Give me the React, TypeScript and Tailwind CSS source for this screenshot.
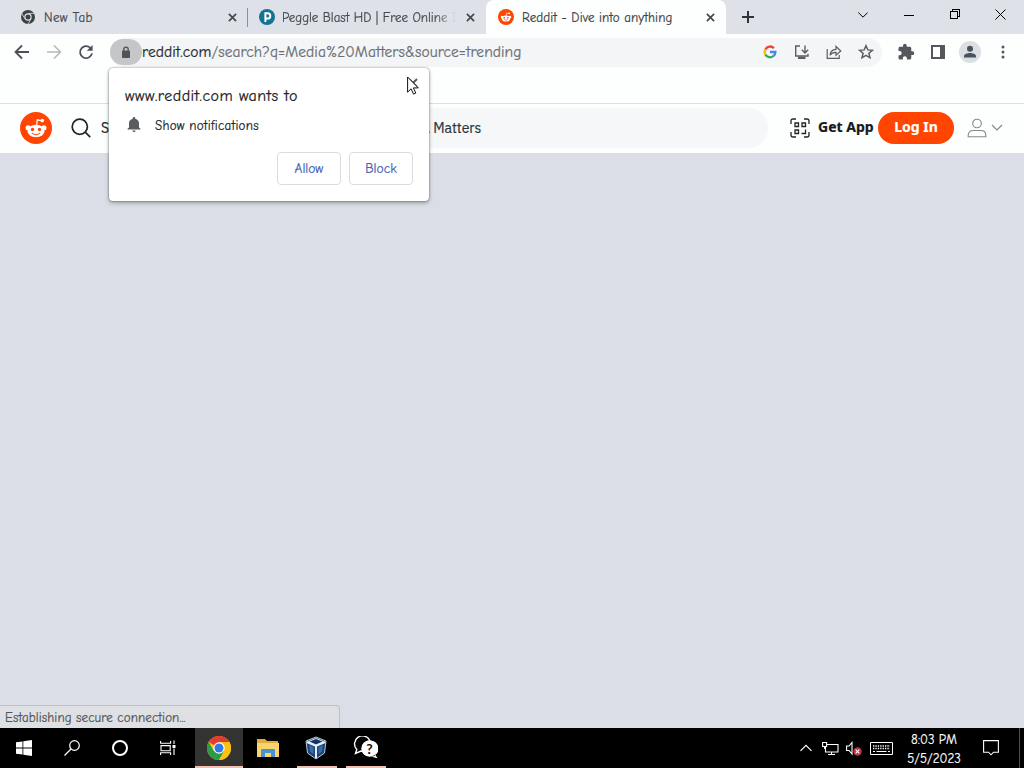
import type { ReactNode } from 'react';

const uiFont = "font-['Comic_Neue','Comic_Sans_MS',Lato,sans-serif]";

const CloseIcon = ({ className }: { className?: string }) => (
  <svg viewBox="0 0 10 10" className={className} fill="none" stroke="currentColor" strokeWidth="1.9">
    <path d="M1 1l8 8M9 1L1 9" />
  </svg>
);

const ChromeMono = () => (
  <svg viewBox="0 0 16 16" className="h-4 w-4 shrink-0">
    <circle cx="8" cy="8" r="7" fill="#3c4146" />
    <path d="M8 4.4h6.2M4.9 9.8L1.9 4.600M11.1 9.8L8 15" fill="none" stroke="#dee1e7" strokeWidth="0.8" />
    <circle cx="8" cy="8" r="3.100" fill="#3c4146" stroke="#dee1e7" strokeWidth="1.200" />
  </svg>
);

const RedditLogo = ({ className }: { className?: string }) => (
  <svg viewBox="0 0 32 32" className={className}>
    <circle cx="16" cy="16" r="16" fill="#ff4500" />
    <path d="M16.6 14l.6-6.2 4.8 1" fill="none" stroke="#fff" strokeWidth="1.2" />
    <circle cx="22.3" cy="8.6" r="1.8" fill="#fff" />
    <circle cx="8" cy="15.8" r="2.5" fill="#fff" />
    <circle cx="24" cy="15.8" r="2.5" fill="#fff" />
    <ellipse cx="16" cy="19" rx="8.6" ry="6.2" fill="#fff" />
    <circle cx="12.5" cy="17.5" r="1.7" fill="#ff4500" />
    <circle cx="19.5" cy="17.5" r="1.7" fill="#ff4500" />
    <path d="M12.2 21.4q3.8 2.6 7.6 0" fill="none" stroke="#ff4500" strokeWidth="1.1" strokeLinecap="round" />
  </svg>
);

const TabStrip = () => (
  <div className="flex h-[34px] bg-[#dee1e7] text-[13px] text-[#45494e]">
    <div className="flex h-[34px] w-[248px] items-center pl-5">
      <ChromeMono />
      <span className="ml-2 w-[142px] pt-px tracking-[0.35px]">New Tab</span>
      <CloseIcon className="ml-[42px] h-[9px] w-[9px]" />
      <span className="ml-[10px] h-[19px] w-px bg-[#8b9097]" />
    </div>
    <div className="flex h-[34px] w-[238px] items-center pl-[11px]">
      <svg viewBox="0 0 16 16" className="h-4 w-4 shrink-0">
        <circle cx="8" cy="8" r="8" fill="#137391" />
        <path d="M6.4 13V4.3h2.3a2.6 2.6 0 010 5.2H6.4" fill="none" stroke="#fff" strokeWidth="2" />
      </svg>
      <span className="ml-[7px] w-[174px] whitespace-nowrap pt-px [mask-image:linear-gradient(to_right,black_88%,transparent)]">
        Peggle Blast HD | Free Online I
      </span>
      <CloseIcon className="ml-[10px] h-[9px] w-[9px]" />
    </div>
    <div className="relative flex h-[34px] w-60 items-center rounded-t-lg bg-[#fdfefe] pl-3">
      <RedditLogo className="h-4 w-4 shrink-0" />
      <span className="ml-2 w-[178px] whitespace-nowrap pt-px tracking-[0.1px] text-[#3c4043]">Reddit - Dive into anything</span>
      <CloseIcon className="ml-[5.5px] h-[9px] w-[9px]" />
    </div>
    <div className="flex flex-1 items-center pl-4 text-black">
      <svg viewBox="0 0 12 12" className="h-3 w-3" fill="none" stroke="#303438" strokeWidth="2">
        <path d="M6 0v12M0 6h12" />
      </svg>
      <svg viewBox="0 0 10 6" className="-mt-1 ml-[104px] h-1.5 w-2.5" fill="none" stroke="currentColor">
        <path d="M.3.5L5 5.2 9.7.5" />
      </svg>
      <span className="-mt-1 ml-9 h-px w-2.5 bg-black" />
      <svg viewBox="0 0 10 10" className="-mt-1.5 ml-9 h-2.5 w-2.5" fill="none" stroke="currentColor" shapeRendering="crispEdges">
        <path d="M.5 2.5h7v7h-7zM2.5 2.5v-2h7v7h-2" />
      </svg>
      <svg viewBox="0 0 11 11" className="-mt-1.5 ml-[35px] h-[11px] w-[11px]" fill="none" stroke="currentColor">
        <path d="M.5.5l10 10M10.5.5l-10 10" />
      </svg>
    </div>
  </div>
);

const ToolIcon = ({ children }: { children: ReactNode }) => (
  <svg viewBox="0 0 16 16" className="h-4 w-4 shrink-0" fill="none" stroke="#5b5f63" strokeWidth="1.4">
    {children}
  </svg>
);

const Toolbar = () => (
  <div className="flex h-9 items-center bg-[#fdfefe] pl-3.5">
    <div className="flex gap-4">
      <ToolIcon><path d="M15 8H2M8 1.5L1.5 8 8 14.5" stroke="#4d5155" strokeWidth="1.8" /></ToolIcon>
      <ToolIcon><path d="M1 8h13M8 1.5L14.5 8 8 14.5" stroke="#b7b9bc" strokeWidth="1.6" /></ToolIcon>
      <ToolIcon>
        <path d="M13.2 5A6 6 0 1014 9.3" stroke="#4d5155" strokeWidth="1.8" />
        <path d="M14.6 1v5.8H8.8z" fill="#4d5155" stroke="none" />
      </ToolIcon>
    </div>
    <div className="ml-4 flex h-[29px] w-[772px] items-center rounded-full bg-[#f3f5f6]">
      <span className="flex h-[26px] w-8 items-center justify-center rounded-full bg-[#c4c6c8]">
        <svg viewBox="0 0 10 13" className="h-[13px] w-2.5">
          <rect x="1" y="4.5" width="8" height="7.5" rx="0.8" fill="#505356" />
          <path d="M2.8 5V3.3a2.2 2.2 0 014.4 0V5" fill="none" stroke="#505356" strokeWidth="1.3" />
        </svg>
      </span>
      <span className="w-[621px] whitespace-nowrap pt-0.5 text-[15.5px] tracking-[0.05px] text-[#6a6e72]">
        <span className="text-[#25282b]">reddit.com</span>/search?q=Media%20Matters&amp;source=trending
      </span>
      <svg viewBox="0 0 14 14" className="mr-[17px] h-3.5 w-3.5 shrink-0" fill="none" strokeWidth="2.3">
        <path d="M2.4 4.4A5.2 5.2 0 0110.9 3.2" stroke="#ea4335" />
        <path d="M2.4 9.6a5.2 5.2 0 010-5.2" stroke="#fbbc05" />
        <path d="M10.6 10.8a5.2 5.2 0 01-8.2-1.2" stroke="#34a853" />
        <path d="M7 7h5.4a5.2 5.2 0 01-1.8 3.8" stroke="#4285f4" />
      </svg>
      <div className="flex gap-4">
        <ToolIcon>
          <path d="M6 2H1.7v10H14V9.8M11 1.5v7M7.8 5.7L11 8.9l3.2-3.2" />
          <path d="M4 13.8h7.5" strokeWidth="2.4" />
        </ToolIcon>
        <ToolIcon>
          <path d="M1.2 5v9.3h12V11M4 11.2c.4-4 2.5-5.7 6-5.8V2.5L14.8 7 10 11.2V8.4c-3-.1-4.8.9-6 2.8z" strokeWidth="1.2" />
        </ToolIcon>
        <ToolIcon>
          <path d="M8 1.7l1.8 4.2 4.6.4-3.5 3 1.1 4.5-4-2.4-4 2.4 1.1-4.5-3.5-3 4.6-.4z" strokeWidth="1.5" />
        </ToolIcon>
      </div>
    </div>
    <div className="ml-[15px] flex items-center">
      <svg viewBox="0 0 24 24" className="h-[18px] w-[18px]" fill="#54585c">
        <path d="M20.5 11H19V7c0-1.1-.9-2-2-2h-4V3.5a2.5 2.5 0 00-5 0V5H4c-1.1 0-2 .9-2 2v3.8h1.5c1.5 0 2.7 1.2 2.7 2.7S5 16.2 3.5 16.2H2V20c0 1.1.9 2 2 2h3.8v-1.5c0-1.5 1.2-2.7 2.7-2.7s2.7 1.2 2.7 2.7V22H17c1.1 0 2-.9 2-2v-4h1.5a2.5 2.5 0 000-5z" />
      </svg>
      <svg viewBox="0 0 14 14" className="ml-4 h-3.5 w-3.5">
        <path d="M1 1h12v12H1z" fill="none" stroke="#54585c" strokeWidth="2" />
        <path d="M9 1h4v12H9z" fill="#54585c" />
      </svg>
      <svg viewBox="0 0 22 22" className="ml-[14px] h-[22px] w-[22px]">
        <circle cx="11" cy="11" r="11" fill="#dbdfe4" />
        <circle cx="11" cy="7.8" r="3" fill="#48525d" />
        <path d="M5 16.5v-1.2c0-2.3 3.5-3.3 6-3.3s6 1 6 3.3v1.2z" fill="#48525d" />
      </svg>
      <svg viewBox="0 0 4 14" className="ml-[19.5px] h-3.5 w-1" fill="#54585c">
        <circle cx="2" cy="2" r="1.5" />
        <circle cx="2" cy="7" r="1.5" />
        <circle cx="2" cy="12" r="1.5" />
      </svg>
    </div>
  </div>
);

const RedditHeader = () => (
  <header className="flex h-[50px] items-center border-t border-[#dedfe1] bg-[#fdfefe] pb-0.5 pl-5">
    <RedditLogo className="h-8 w-8" />
    <div className="ml-3 flex h-10 w-[704px] items-center rounded-full bg-gradient-to-r from-[#fdfefe] from-15% to-[#f5f7f9] to-30% pl-[7px]">
      <svg viewBox="0 0 20 20" className="h-5 w-5 shrink-0" fill="none" stroke="#202428" strokeWidth="1.7">
        <circle cx="8.8" cy="8.7" r="7.6" />
        <path d="M14.2 14.2l5 5" />
      </svg>
      <span className="ml-[10px] whitespace-nowrap font-['IBM_Plex_Sans','Liberation_Sans',sans-serif] text-sm text-[#24282c]">
        Search
      </span>
      <span className="ml-[278px] whitespace-nowrap font-['IBM_Plex_Sans','Liberation_Sans',sans-serif] text-sm text-[#303438]">
        a Matters
      </span>
    </div>
    <div className="flex flex-1 items-center font-['Noto_Sans',sans-serif] text-sm font-bold">
      <svg viewBox="0 0 20 20" className="ml-[22px] h-5 w-5" fill="none" stroke="#202428" strokeWidth="1.3">
        <path d="M1 6V3q0-2 2-2h3M14 1h3q2 0 2 2v3M1 14v3q0 2 2 2h3M14 19h3q2 0 2-2v-3" />
        <path d="M5 5h3.5v3.5H5zM12 5h3.5v3.5H12zM5 12h3.5v3.5H5zM15.5 11.5v4h-4" />
      </svg>
      <span className="ml-2 w-[56px] whitespace-nowrap pb-0.5 text-[#17191b]">Get App</span>
      <span className="ml-1 flex h-8 w-[76px] items-center justify-center rounded-full bg-[#ff4500] pb-0.5 text-white">Log In</span>
      <svg viewBox="0 0 20 20" className="ml-[13px] h-5 w-5" fill="none" stroke="#85888b" strokeWidth="1.1">
        <circle cx="10" cy="5.5" r="4.3" />
        <path d="M1.2 18.8v-1.5c0-3 2-4.8 4.8-4.8h8c2.8 0 4.8 1.8 4.8 4.8v1.5z" />
      </svg>
      <svg viewBox="0 0 12 8" className="ml-1 h-2 w-3" fill="none" stroke="#85888b" strokeWidth="1.2">
        <path d="M1 1l5 5 5-5" />
      </svg>
    </div>
  </header>
);

const PermissionPopup = () => (
  <div className="absolute left-[109px] top-[68px] h-[133px] w-80 rounded-[4px] bg-white px-4 pt-[17px] text-[#202124] shadow-[0_0_2px_rgba(0,0,0,0.5),0_2px_4px_rgba(0,0,0,0.3)]">
    <p className="text-[16px] leading-[22px] tracking-[0.42px]">www.reddit.com wants to</p>
    <div className="mt-2 flex h-5 items-center">
      <svg viewBox="0 0 14 16" className="ml-[2px] h-4 w-3.5" fill="#5a5d60">
        <path d="M7 15a1.6 1.6 0 001.6-1.5H5.4A1.6 1.6 0 007 15zM12 10.5v-4c0-2.5-1.3-4.2-3.7-4.8V1.3a1.3 1.3 0 00-2.6 0v.4C3.3 2.3 2 4 2 6.500v4L.5 11.8v.8h13v-.8z" />
      </svg>
      <span className="ml-[14px] pt-0.5 text-[13px] tracking-[0.25px]">Show notifications</span>
    </div>
    <div className="mt-[17px] flex justify-end gap-2 text-[13.5px] text-[#3f62b5]">
      <span className="flex h-[33px] w-16 items-center justify-center rounded border border-[#dadce0] pt-px">Allow</span>
      <span className="flex h-[33px] w-16 items-center justify-center rounded border border-[#dadce0] pt-px">Block</span>
    </div>
    <CloseIcon className="absolute right-[11px] top-[10px] h-2.5 w-2.5 text-[#55585b]" />
    <svg viewBox="0 0 12 19" className="absolute left-[298px] top-2 h-[19px] w-3">
      <path d="M.6 1v15.2l3.5-3.4 2.4 5.3 2.3-1-2.4-5.2h4.9z" fill="#fff" stroke="#111" strokeWidth="1" />
    </svg>
  </div>
);

const ChromeColor = () => (
  <svg viewBox="0 0 24 24" className="h-6 w-6">
    <circle cx="12" cy="12" r="12" fill="#fbc116" />
    <path d="M12 12L1.6 6A12 12 0 0122.4 6H12z" fill="#e33b2e" />
    <path d="M1.6 6A12 12 0 0012 24l5.2-9L12 12 6.8 15z" fill="#2a9b47" />
    <path d="M22.4 6A12 12 0 0112 24l5.2-9L15 6z" fill="#fbc116" />
    <circle cx="12" cy="12" r="5.7" fill="#fff" />
    <circle cx="12" cy="12" r="4.5" fill="#3478e5" />
  </svg>
);

const Taskbar = () => (
  <footer className="flex h-10 items-center bg-black text-white">
    <div className="flex h-10 w-12 items-center justify-center">
      <svg viewBox="0 0 16 16" className="h-4 w-4" fill="currentColor">
        <path d="M0 2.3l6.5-.9v6.1H0zM7.3 1.3L16 0v7.5H7.3zM0 8.4h6.5v6.2L0 13.7zM7.3 8.4H16V16l-8.7-1.3z" />
      </svg>
    </div>
    <div className="flex h-10 w-12 items-center justify-center">
      <svg viewBox="0 0 16 16" className="h-4 w-4" fill="none" stroke="currentColor" strokeWidth="1.2">
        <circle cx="10.5" cy="5.5" r="4.8" />
        <path d="M7 9L.5 15.5" />
      </svg>
    </div>
    <div className="flex h-10 w-12 items-center justify-center">
      <span className="h-4 w-4 rounded-full border-2 border-white" />
    </div>
    <div className="flex h-10 w-[51px] items-center pl-4">
      <svg viewBox="0 0 16 16" className="h-4 w-4" fill="none" stroke="currentColor" strokeWidth="1.1">
        <path d="M.6 1v2.3h10V1M1 5.6h9.2v5.2H1zM.6 15v-2.3h10V15M14 .5V4M14 8.5V15" />
        <path d="M12.5 5h3v3h-3z" fill="currentColor" stroke="none" />
      </svg>
    </div>
    <div className="flex h-10 w-12 items-center justify-center border-b-2 border-[#f1c0b0] bg-[#333432] pt-0.5">
      <ChromeColor />
    </div>
    <div className="flex h-10 w-[54px] items-center pl-[14px]">
      <svg viewBox="0 0 22 20" className="h-5 w-[22px]">
        <path d="M0 1h8l2 2h11v16H0z" fill="#e2ab3e" />
        <path d="M0 5h22v14H0z" fill="#f9d36b" />
        <path d="M4 19v-7q0-1 1-1h12q1 0 1 1v7h-4v-4H8v4z" fill="#4793cf" />
      </svg>
    </div>
    <div className="flex h-10 w-10 items-center justify-center border-b-2 border-[#f1c0b0] pr-[3px] pt-0.5">
      <svg viewBox="0 0 22 24" className="h-6 w-[22px]">
        <path d="M11 1l10 4-1.5 12L11 23l-8.500-6L1 5z" fill="#1c4278" stroke="#b8cbe0" strokeWidth="1" />
        <path d="M11 2.5l7.5 3L11 9 3.500 5.500z" fill="#17345d" stroke="#d3e0ee" />
        <path d="M2 6l9 4 9-4M11 10v12" fill="none" stroke="#e8f0f7" strokeWidth="2" />
        <path d="M4 9l4.500 2.200v7L5 15.500zM18 9l-4.500 2.200v7l3.500-2.700z" fill="#376da9" />
      </svg>
    </div>
    <div className="ml-[9px] flex h-10 w-10 items-center justify-center border-b-2 border-[#f1c0b0] pr-0.5 pt-0.5">
      <svg viewBox="0 0 25 24" className="h-6 w-[25px]">
        <path d="M2.500 17.500l1.300-4A8 8 0 1112 15.500L8 15z" fill="#050505" stroke="#fff" strokeWidth="1.4" />
        <path d="M16 4.500a8 8 0 106 13.800l2.500 4-6-1.500A8 8 0 0016 4.500z" fill="#fff" />
        <circle cx="16.5" cy="12.5" r="8" fill="#fff" />
        <text x="16.5" y="17.5" textAnchor="middle" fontSize="14" fontWeight="700" fontFamily="Lato, sans-serif" fill="#111">?</text>
      </svg>
    </div>
    <div className="ml-auto flex h-10 items-center">
      <svg viewBox="0 0 12 8" className="h-2 w-3" fill="none" stroke="currentColor" strokeWidth="1.2">
        <path d="M.5 6.8L6 1.3l5.500 5.500" />
      </svg>
      <svg viewBox="0 0 17 15" className="ml-2.5 h-[15px] w-[17px]" fill="none" stroke="currentColor" strokeWidth="1.1">
        <path d="M5 3.500h11v7.500H3.500V6M9.500 11v3M6 13.500h7M.6 1.500h4v4h-4zM2.600 5.500V8" />
      </svg>
      <svg viewBox="0 0 16 15" className="ml-[7px] h-[15px] w-4" fill="none" stroke="currentColor" strokeWidth="1.1">
        <path d="M.6 5v4.500H3L6 13V1.500L3 5z" />
        <circle cx="11.500" cy="10.500" r="4.200" fill="#c92e45" stroke="none" />
        <path d="M9.700 8.700l3.600 3.600M13.300 8.700l-3.600 3.600" />
      </svg>
      <svg viewBox="0 0 23 13" className="ml-2 h-[13px] w-[23px]" fill="none" stroke="currentColor">
        <path d="M.5.5h22v12H.5z" />
        <path d="M3 4h17M3 6.500h17" strokeWidth="1.300" strokeDasharray="1.300 1.100" />
        <path d="M3 9.500h2M6.500 9.500h10M18 9.500h2" />
      </svg>
      <div className="ml-[9px] w-[64px] pt-0.5 text-center text-[13px] leading-[19px]">
        <p className="whitespace-nowrap">8:03 PM</p>
        <p className="whitespace-nowrap">5/5/2023</p>
      </div>
      <svg viewBox="0 0 16 16" className="ml-[17px] h-4 w-4" fill="none" stroke="currentColor" strokeWidth="1.1">
        <path d="M.6.6h14.8v11.600H10.500L8 14.800l-2.500-2.600H.6z" />
      </svg>
      <span className="ml-5 mr-1 h-10 w-px bg-[#505050]" />
    </div>
  </footer>
);

export default function App() {
  return (
    <div className={`relative flex h-[768px] w-[1024px] flex-col overflow-hidden bg-[#dbdee6] [-webkit-text-stroke:0.2px] ${uiFont}`}>
      <TabStrip />
      <Toolbar />
      <div className="h-[33px] bg-[#fdfefe]" />
      <RedditHeader />
      <main className="flex flex-1 flex-col justify-end">
        <div className="flex h-[23px] w-[340px] items-center rounded-tr border-r border-t border-[#bfc1c6] bg-[#dee0e4] pl-[5px] pt-0.5 text-[13px] tracking-[0.1px] text-[#505358]">
          Establishing secure connection...
        </div>
      </main>
      <Taskbar />
      <PermissionPopup />
    </div>
  );
}
